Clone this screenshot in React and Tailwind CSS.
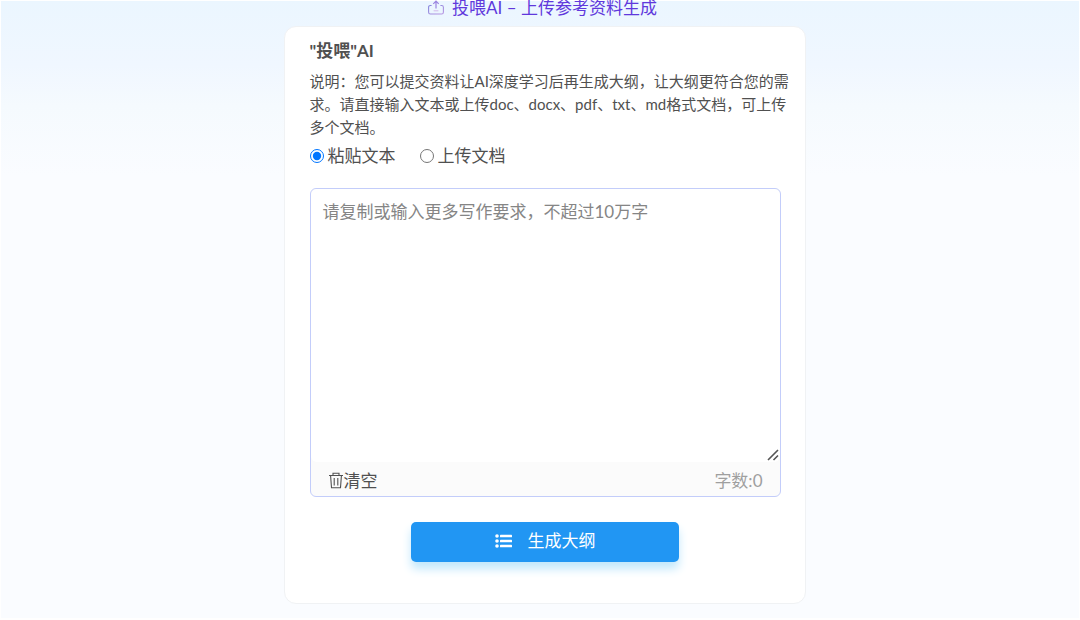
import { useState } from "react";

function UploadIcon() {
  return (
    <svg viewBox="0 0 16 15" className="h-[15px] w-4 shrink-0" fill="none" aria-hidden="true">
      <defs>
        <linearGradient id="upload-stroke" x1="0" y1="0" x2="1" y2="1">
          <stop offset="0" stopColor="#8585dc" />
          <stop offset="1" stopColor="#b896e2" />
        </linearGradient>
      </defs>
      <path
        d="M3.6 5.5H2.4C1.3 5.5.6 6.2.6 7.2v5c0 1.1.7 1.8 1.8 1.8h11.2c1.1 0 1.8-.7 1.8-1.8v-5c0-1-.7-1.7-1.8-1.7h-1.2"
        stroke="url(#upload-stroke)"
        strokeWidth="1.1"
      />
      <path d="M8 8.6V1.2M5.3 3.8 8 1.1l2.7 2.7" stroke="#9a84e0" strokeWidth="1.2" />
      <path d="M5.6 10.8h4.8" stroke="#d3b9ec" />
    </svg>
  );
}

function TrashIcon() {
  return (
    <svg viewBox="0 0 16 17" className="h-[17px] w-4 shrink-0" fill="none" stroke="currentColor" aria-hidden="true">
      <path d="M1 3.5h14M5 3.3V1.2h6v2.1M2.6 3.7l.9 12.1h9l.9-12.1M6.2 6v7.4M9.8 6v7.4" strokeWidth="1.1" />
    </svg>
  );
}

function ListIcon() {
  return (
    <svg viewBox="0 0 17 14" className="h-[14px] w-[17px] shrink-0" fill="currentColor" aria-hidden="true">
      <circle cx="2" cy="2" r="1.8" />
      <circle cx="2" cy="7" r="1.8" />
      <circle cx="2" cy="12" r="1.8" />
      <rect x="5" y="0.8" width="12" height="2.5" rx="0.6" />
      <rect x="5" y="5.8" width="12" height="2.5" rx="0.6" />
      <rect x="5" y="10.8" width="12" height="2.5" rx="0.6" />
    </svg>
  );
}

function SourceOption({ value, label, source, onSelect }) {
  return (
    <label className="flex items-center gap-1">
      <input
        type="radio"
        name="source"
        value={value}
        checked={source === value}
        onChange={() => onSelect(value)}
        className="size-[14px] accent-[#0075ff]"
      />
      {label}
    </label>
  );
}

export default function App() {
  const [source, setSource] = useState("text");
  const [text, setText] = useState("");

  return (
    <main className="min-h-screen border-x border-t border-b-2 border-white bg-[#fafcff] bg-[linear-gradient(#ebf6ff_0px,#f0f7ff_64px,#f5fafe_105px,#fafcff_175px)] pb-3 pl-[9px] font-['Lato','Noto_Sans_CJK_SC',sans-serif] text-[17px] text-[#505050]">
      <h1 className="flex h-[25px] items-start justify-center gap-2 pr-1 leading-[14px] text-[#6038dc]">
        <span className="flex h-3 items-center">
          <UploadIcon />
        </span>
        投喂AI – 上传参考资料生成
      </h1>

      <section className="mx-auto max-w-[522px] rounded-xl border border-[#f0f2f4] bg-white pt-3 pr-6 pb-[41px] pl-[25px]">
        <h2 className="leading-6 font-bold">"投喂"AI</h2>
        <p className="mt-[7px] -mr-4 text-[15px] leading-[23px]">
          说明：您可以提交资料让AI深度学习后再生成大纲，让大纲更符合您的需
          <br />
          求。请直接输入文本或上传doc、docx、pdf、txt、md格式文档，可上传
          <br />
          多个文档。
        </p>

        <div className="mt-[5px] flex gap-6 leading-6">
          <SourceOption value="text" label="粘贴文本" source={source} onSelect={setSource} />
          <SourceOption value="file" label="上传文档" source={source} onSelect={setSource} />
        </div>

        <div className="mt-5 overflow-hidden rounded-md border border-[#c3cdfa] bg-[#fbfbfb]">
          <div className="relative">
            <textarea
              aria-label="写作要求"
              value={text}
              onChange={(event) => setText(event.target.value)}
              placeholder="请复制或输入更多写作要求，不超过10万字"
              className="block h-[273px] w-full resize-none rounded-md bg-white px-3 py-[11px] leading-6 outline-none placeholder:text-[#858585]"
            />
            <svg viewBox="0 0 12 12" className="pointer-events-none absolute right-px bottom-px size-3" stroke="#555" strokeWidth="1.6" aria-hidden="true">
              <path d="M1 11 11 1M6.5 11 11 6.5" />
            </svg>
          </div>
          <div className="flex h-[34px] items-center justify-between px-[17px] pt-[3px]">
            <button type="button" onClick={() => setText("")} className="flex items-center">
              <TrashIcon />
              清空
            </button>
            <span className="text-[#9f9f9f]">字数:{text.length}</span>
          </div>
        </div>

        <button
          type="button"
          className="mx-auto mt-[25px] flex h-10 w-[268px] items-center justify-center gap-4 rounded-[5px] bg-[#2196f3] pb-[2px] text-white shadow-[0_7px_10px_#c3e8fb]"
        >
          <ListIcon />
          生成大纲
        </button>
      </section>
    </main>
  );
}
